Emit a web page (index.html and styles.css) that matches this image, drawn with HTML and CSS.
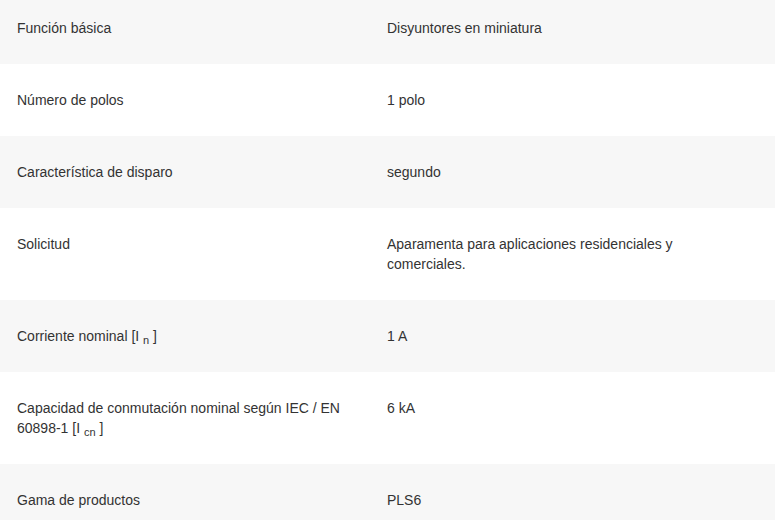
FILE: index.html
```html
<!DOCTYPE html>
<html lang="es">
<head>
<meta charset="utf-8">
<title>Especificaciones</title>
<link rel="stylesheet" href="styles.css">
</head>
<body>
<div class="specs">
  <div class="row"><div class="label">Función básica</div><div class="value">Disyuntores en miniatura</div></div>
  <div class="row"><div class="label">Número de polos</div><div class="value">1 polo</div></div>
  <div class="row"><div class="label">Característica de disparo</div><div class="value">segundo</div></div>
  <div class="row"><div class="label">Solicitud</div><div class="value">Aparamenta para aplicaciones residenciales y comerciales.</div></div>
  <div class="row"><div class="label">Corriente nominal [I <sub>n</sub> ]</div><div class="value">1 A</div></div>
  <div class="row"><div class="label">Capacidad de conmutación nominal según IEC / EN 60898-1 [I <sub>cn</sub> ]</div><div class="value">6 kA</div></div>
  <div class="row"><div class="label">Gama de productos</div><div class="value">PLS6</div></div>
</div>
</body>
</html>
```

FILE: styles.css
```css
html, body {
  margin: 0;
  padding: 0;
  background: #ffffff;
}

body {
  font-family: "Liberation Sans", Arial, sans-serif;
  font-size: 14px;
  line-height: 20px;
  color: #333333;
}

.specs {
  margin-top: -8px;
}

.row {
  display: grid;
  grid-template-columns: 370px 1fr;
  background: #ffffff;
}

.row:nth-child(odd) {
  background: #f7f7f7;
}

.label,
.value {
  padding: 26px 17px;
}

.label {
  padding-right: 20px;
}

.value {
  padding-right: 30px;
}

sub {
  font-size: 11px;
  line-height: 0;
  vertical-align: -3px;
}
```
